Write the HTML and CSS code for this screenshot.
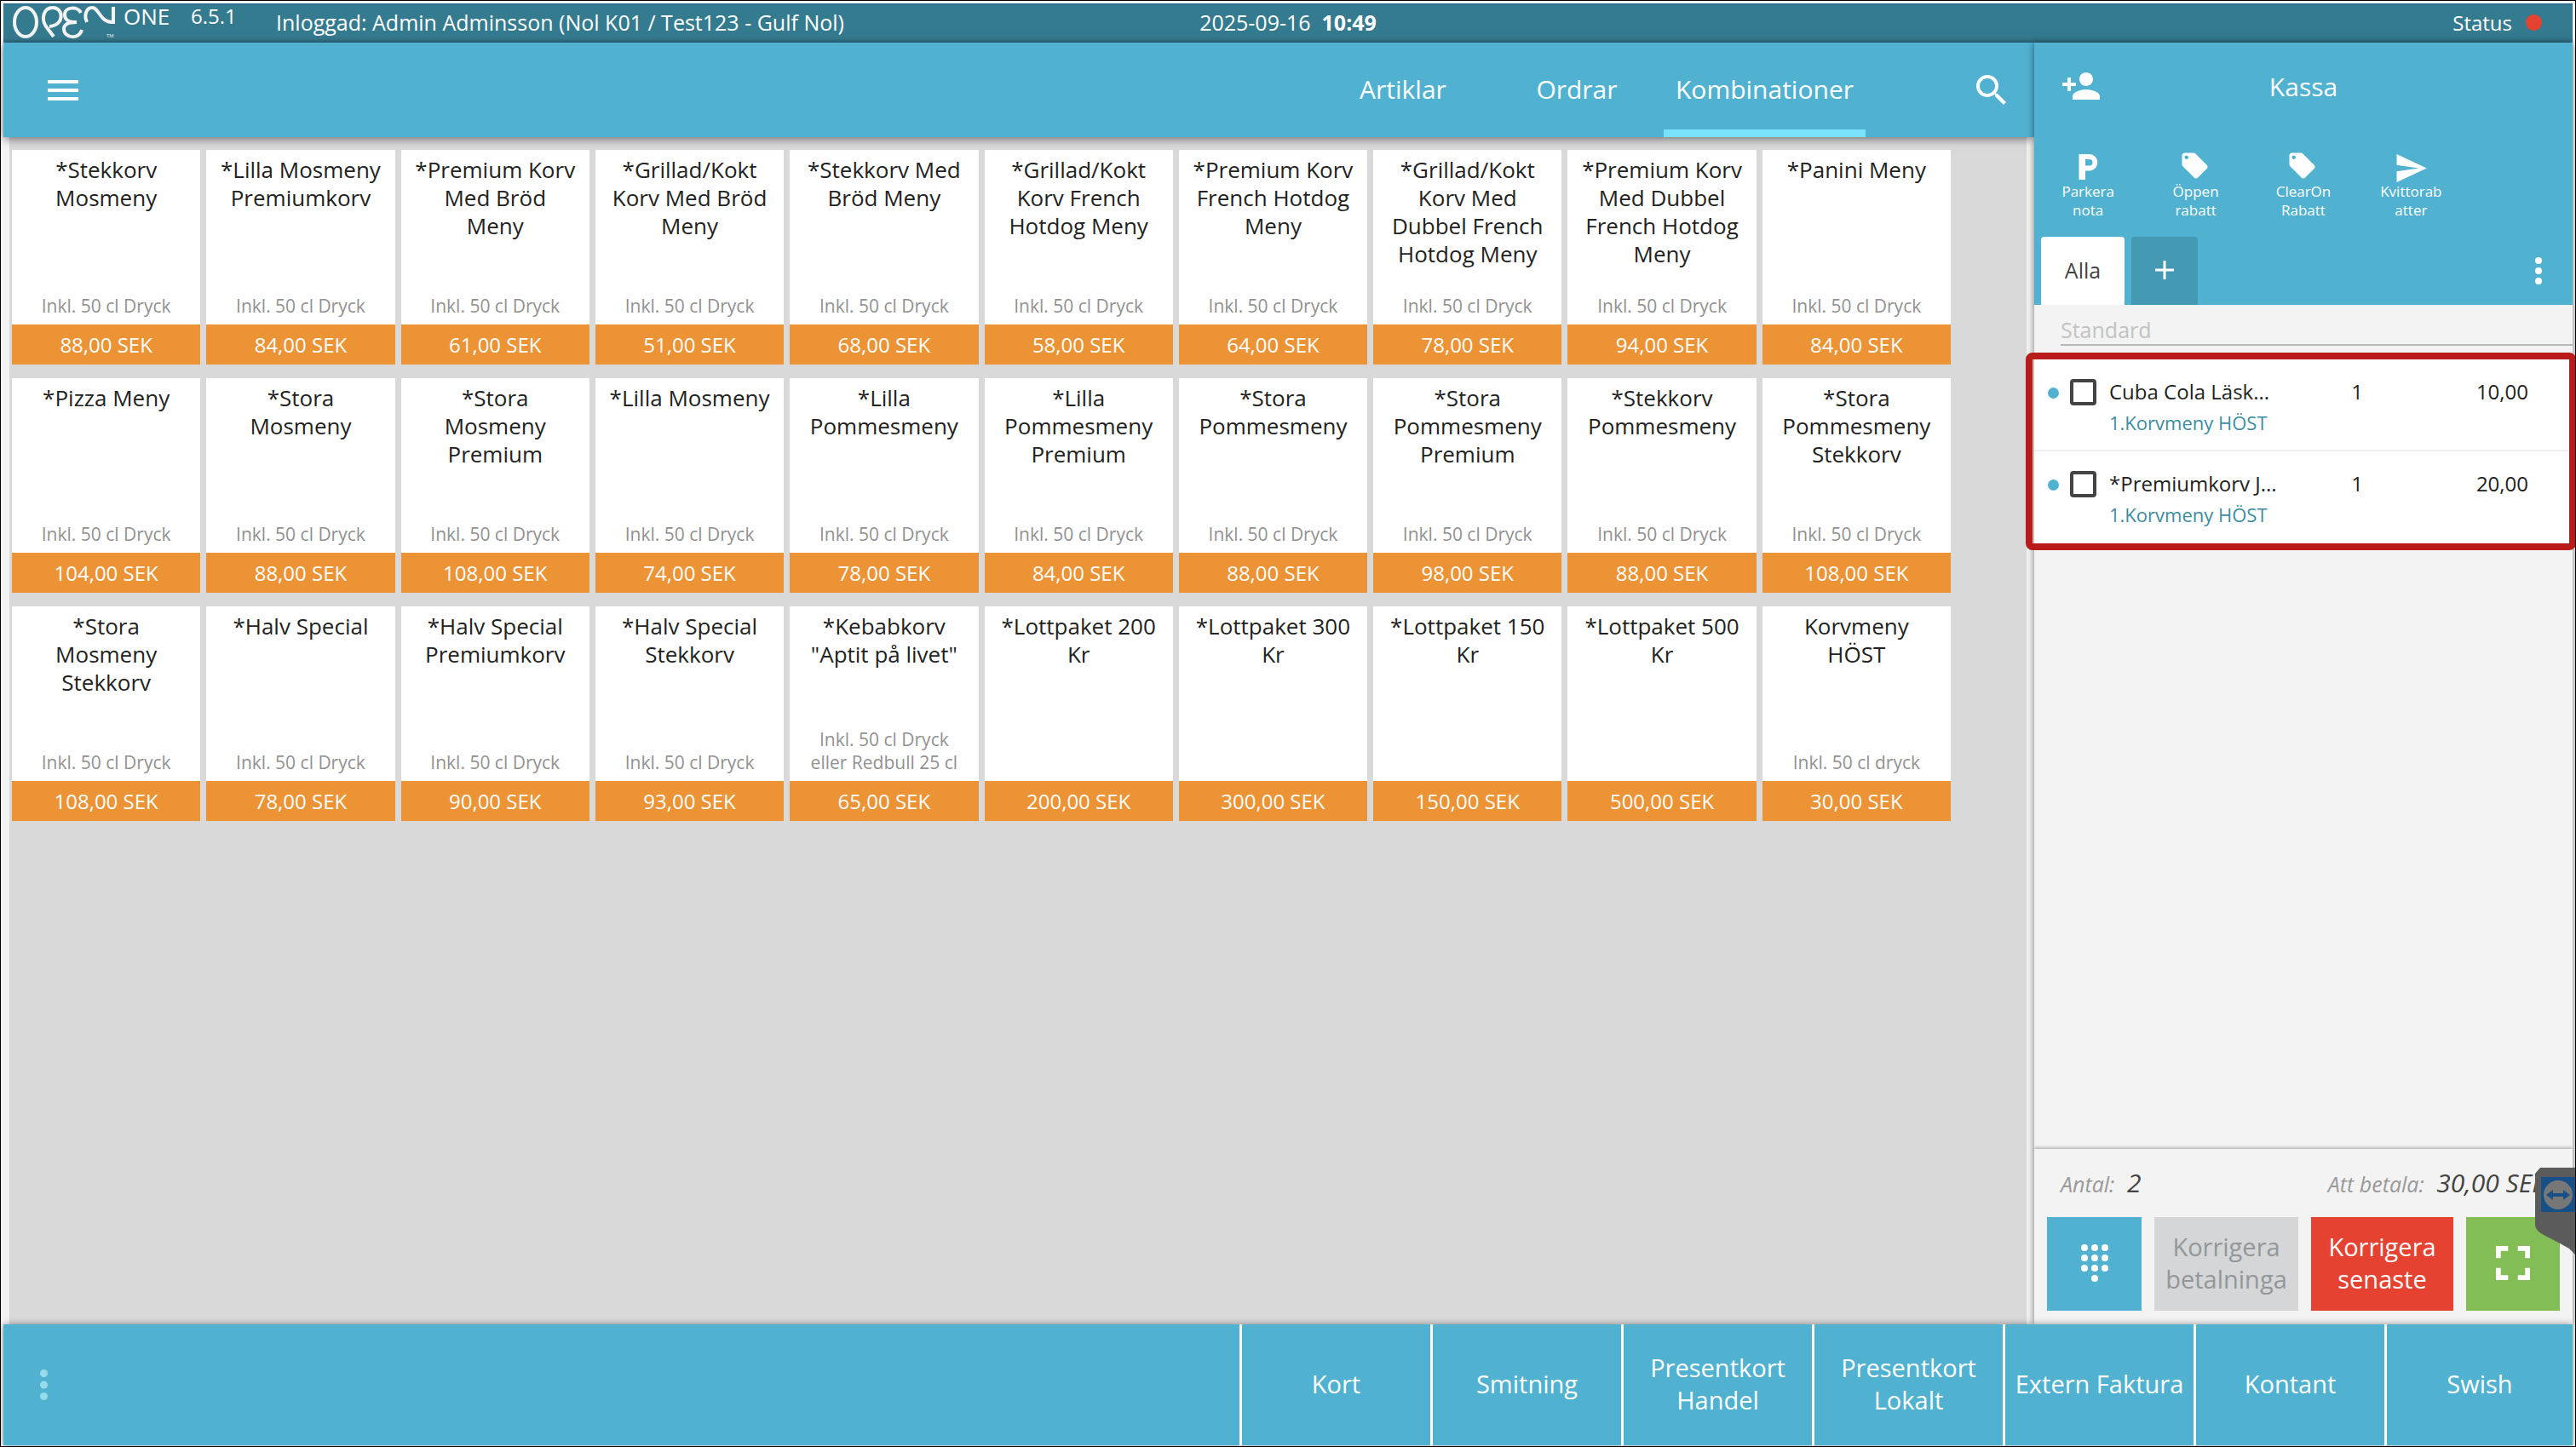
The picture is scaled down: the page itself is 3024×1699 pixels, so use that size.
FILE: index.html
```html
<!DOCTYPE html>
<html lang="sv">

<head>
    <meta charset="UTF-8">
    <title>Open One - Kassa</title>
    <link rel="stylesheet" href="styles.css">
</head>

<body>
    <header class="topbar">
        <div class="topbar-left">
            <svg class="logo" viewBox="0 0 122 40" role="img" aria-label="Open">
                <ellipse cx="16" cy="20" rx="13" ry="17" />
                <path d="M49 37 L40 25 C34 16 37 3 48 3 C61 3 62 24 44 25" />
                <path d="M81 9 C77 1 62 2 62 11 C62 18 67 20 76 20 C66 20 61 23 61 28 C61 39 79 41 82 29" />
                <path d="M88 20 C84 11 88 3 94 3 C103 3 102 20 119 20 V2" />
                <text x="111" y="38">TM</text>
            </svg>
            <span class="brand">ONE</span>
            <span class="version">6.5.1</span>
            <span class="user">Inloggad: Admin Adminsson (Nol K01 / Test123 - Gulf Nol)</span>
        </div>
        <span class="clock">2025-09-16&nbsp; <b>10:49</b></span>
        <span class="status">Status <i class="status-dot"></i></span>
    </header>

    <div class="content">
        <main class="left">
            <nav class="navbar">
                <button class="icon-btn menu-btn" aria-label="Meny">
                    <svg width="36" height="24" viewBox="0 0 36 24"><path d="M0 0h36v4H0zM0 10h36v4H0zM0 20h36v4H0z" /></svg>
                </button>
                <a class="tab" href="#artiklar">Artiklar</a>
                <a class="tab" href="#ordrar">Ordrar</a>
                <a class="tab active" href="#kombinationer">Kombinationer</a>
                <button class="icon-btn search-btn" aria-label="Sök">
                    <svg width="36" height="36" viewBox="3 3 18 18"><path d="M15.5 14h-.79l-.28-.27A6.471 6.471 0 0 0 16 9.500 6.500 6.500 0 1 0 9.500 16c1.610 0 3.090-.59 4.230-1.570l.27.28v.79l5 4.990L20.490 19l-4.990-5zm-6 0C7.010 14 5 11.990 5 9.500S7.010 5 9.500 5 14 7.010 14 9.500 11.990 14 9.500 14z" /></svg>
                </button>
            </nav>

            <div class="products">
                <button class="card"><span class="name">*Stekkorv<br>Mosmeny</span><span class="info">Inkl. 50 cl Dryck</span><span class="price">88,00 SEK</span></button>
                <button class="card"><span class="name">*Lilla Mosmeny<br>Premiumkorv</span><span class="info">Inkl. 50 cl Dryck</span><span class="price">84,00 SEK</span></button>
                <button class="card"><span class="name">*Premium Korv<br>Med Bröd<br>Meny</span><span class="info">Inkl. 50 cl Dryck</span><span class="price">61,00 SEK</span></button>
                <button class="card"><span class="name">*Grillad/Kokt<br>Korv Med Bröd<br>Meny</span><span class="info">Inkl. 50 cl Dryck</span><span class="price">51,00 SEK</span></button>
                <button class="card"><span class="name">*Stekkorv Med<br>Bröd Meny</span><span class="info">Inkl. 50 cl Dryck</span><span class="price">68,00 SEK</span></button>
                <button class="card"><span class="name">*Grillad/Kokt<br>Korv French<br>Hotdog Meny</span><span class="info">Inkl. 50 cl Dryck</span><span class="price">58,00 SEK</span></button>
                <button class="card"><span class="name">*Premium Korv<br>French Hotdog<br>Meny</span><span class="info">Inkl. 50 cl Dryck</span><span class="price">64,00 SEK</span></button>
                <button class="card"><span class="name">*Grillad/Kokt<br>Korv Med<br>Dubbel French<br>Hotdog Meny</span><span class="info">Inkl. 50 cl Dryck</span><span class="price">78,00 SEK</span></button>
                <button class="card"><span class="name">*Premium Korv<br>Med Dubbel<br>French Hotdog<br>Meny</span><span class="info">Inkl. 50 cl Dryck</span><span class="price">94,00 SEK</span></button>
                <button class="card"><span class="name">*Panini Meny</span><span class="info">Inkl. 50 cl Dryck</span><span class="price">84,00 SEK</span></button>

                <button class="card"><span class="name">*Pizza Meny</span><span class="info">Inkl. 50 cl Dryck</span><span class="price">104,00 SEK</span></button>
                <button class="card"><span class="name">*Stora<br>Mosmeny</span><span class="info">Inkl. 50 cl Dryck</span><span class="price">88,00 SEK</span></button>
                <button class="card"><span class="name">*Stora<br>Mosmeny<br>Premium</span><span class="info">Inkl. 50 cl Dryck</span><span class="price">108,00 SEK</span></button>
                <button class="card"><span class="name">*Lilla Mosmeny</span><span class="info">Inkl. 50 cl Dryck</span><span class="price">74,00 SEK</span></button>
                <button class="card"><span class="name">*Lilla<br>Pommesmeny</span><span class="info">Inkl. 50 cl Dryck</span><span class="price">78,00 SEK</span></button>
                <button class="card"><span class="name">*Lilla<br>Pommesmeny<br>Premium</span><span class="info">Inkl. 50 cl Dryck</span><span class="price">84,00 SEK</span></button>
                <button class="card"><span class="name">*Stora<br>Pommesmeny</span><span class="info">Inkl. 50 cl Dryck</span><span class="price">88,00 SEK</span></button>
                <button class="card"><span class="name">*Stora<br>Pommesmeny<br>Premium</span><span class="info">Inkl. 50 cl Dryck</span><span class="price">98,00 SEK</span></button>
                <button class="card"><span class="name">*Stekkorv<br>Pommesmeny</span><span class="info">Inkl. 50 cl Dryck</span><span class="price">88,00 SEK</span></button>
                <button class="card"><span class="name">*Stora<br>Pommesmeny<br>Stekkorv</span><span class="info">Inkl. 50 cl Dryck</span><span class="price">108,00 SEK</span></button>

                <button class="card"><span class="name">*Stora<br>Mosmeny<br>Stekkorv</span><span class="info">Inkl. 50 cl Dryck</span><span class="price">108,00 SEK</span></button>
                <button class="card"><span class="name">*Halv Special</span><span class="info">Inkl. 50 cl Dryck</span><span class="price">78,00 SEK</span></button>
                <button class="card"><span class="name">*Halv Special<br>Premiumkorv</span><span class="info">Inkl. 50 cl Dryck</span><span class="price">90,00 SEK</span></button>
                <button class="card"><span class="name">*Halv Special<br>Stekkorv</span><span class="info">Inkl. 50 cl Dryck</span><span class="price">93,00 SEK</span></button>
                <button class="card"><span class="name">*Kebabkorv<br>"Aptit på livet"</span><span class="info">Inkl. 50 cl Dryck<br>eller Redbull 25 cl</span><span class="price">65,00 SEK</span></button>
                <button class="card"><span class="name">*Lottpaket 200<br>Kr</span><span class="price">200,00 SEK</span></button>
                <button class="card"><span class="name">*Lottpaket 300<br>Kr</span><span class="price">300,00 SEK</span></button>
                <button class="card"><span class="name">*Lottpaket 150<br>Kr</span><span class="price">150,00 SEK</span></button>
                <button class="card"><span class="name">*Lottpaket 500<br>Kr</span><span class="price">500,00 SEK</span></button>
                <button class="card"><span class="name">Korvmeny<br>HÖST</span><span class="info">Inkl. 50 cl dryck</span><span class="price">30,00 SEK</span></button>
            </div>
        </main>

        <aside class="register">
            <div class="register-head">
                <div class="register-title">
                    <button class="icon-btn" aria-label="Lägg till kund">
                        <svg width="44" height="32" viewBox="1 4 22 16"><path d="M15 12c2.210 0 4-1.790 4-4s-1.790-4-4-4-4 1.790-4 4 1.790 4 4 4zm-9-2V7H4v3H1v2h3v3h2v-3h3v-2H6zm9 4c-2.670 0-8 1.340-8 4v2h16v-2c0-2.660-5.330-4-8-4z" /></svg>
                    </button>
                    <h1>Kassa</h1>
                </div>
                <div class="actions">
                    <button class="action">
                        <svg viewBox="0 0 24 24"><path d="M13 2H5v20h5v-7h3c3.600 0 6.500-2.900 6.500-6.500S16.600 2 13 2zm.2 9H10V6h3.200c1.400 0 2.500 1.100 2.500 2.500S14.600 11 13.200 11z" /></svg>
                        Parkera<br>nota
                    </button>
                    <button class="action">
                        <svg viewBox="0 0 24 24"><path d="M20.410 10.580l-9-9C11.050 1.220 10.550 1 10 1H3c-1.100 0-2 .9-2 2v7c0 .55.22 1.050.59 1.420l9 9c.36.36.86.58 1.410.58.55 0 1.050-.22 1.410-.59l7-7c.37-.36.59-.86.59-1.410 0-.55-.23-1.060-.59-1.420zM4.500 6C3.670 6 3 5.330 3 4.500S3.670 3 4.500 3 6 3.670 6 4.500 5.330 6 4.500 6z" /></svg>
                        Öppen<br>rabatt
                    </button>
                    <button class="action">
                        <svg viewBox="0 0 24 24"><path d="M20.410 10.580l-9-9C11.050 1.220 10.550 1 10 1H3c-1.100 0-2 .9-2 2v7c0 .55.22 1.050.59 1.420l9 9c.36.36.86.58 1.410.58.55 0 1.050-.22 1.410-.59l7-7c.37-.36.59-.86.59-1.410 0-.55-.23-1.060-.59-1.420zM4.500 6C3.670 6 3 5.330 3 4.500S3.670 3 4.500 3 6 3.670 6 4.500 5.330 6 4.500 6z" /></svg>
                        ClearOn<br>Rabatt
                    </button>
                    <button class="action">
                        <svg viewBox="0 0 24 24"><path d="M1 24L24.500 13 1 2v8.500l17 2.500-17 2.500z" /></svg>
                        Kvittorab<br>atter
                    </button>
                </div>
                <div class="nota-tabs">
                    <button class="nota-tab selected">Alla</button>
                    <button class="nota-tab add" aria-label="Ny nota">
                        <svg width="22" height="22" viewBox="0 0 22 22"><path d="M9.500 0h3v9.500H22v3h-9.500V22h-3v-9.500H0v-3h9.500z" /></svg>
                    </button>
                    <button class="icon-btn more" aria-label="Mer">
                        <svg width="8" height="32" viewBox="0 0 8 32"><circle cx="4" cy="4" r="4" /><circle cx="4" cy="16" r="4" /><circle cx="4" cy="28" r="4" /></svg>
                    </button>
                </div>
            </div>

            <input class="note-name" type="text" placeholder="Standard" aria-label="Notans namn">

            <div class="order">
                <table>
                    <tr>
                        <td>
                            <div class="item">
                                <i class="dot"></i>
                                <input type="checkbox" id="rad1">
                                <label for="rad1">Cuba Cola Läsk...<small>1.Korvmeny HÖST</small></label>
                            </div>
                        </td>
                        <td class="col-qty">1</td>
                        <td class="col-sum">10,00</td>
                    </tr>
                    <tr>
                        <td>
                            <div class="item">
                                <i class="dot"></i>
                                <input type="checkbox" id="rad2">
                                <label for="rad2">*Premiumkorv J...<small>1.Korvmeny HÖST</small></label>
                            </div>
                        </td>
                        <td class="col-qty">1</td>
                        <td class="col-sum">20,00</td>
                    </tr>
                </table>
            </div>

            <div class="summary">
                <div class="totals">
                    <span>Antal: <b>2</b></span>
                    <span>Att betala: <b>30,00 SEK</b></span>
                </div>
                <div class="register-buttons">
                    <button class="big-btn blue" aria-label="Knappsats">
                        <svg width="32" height="44" viewBox="0 0 32 44">
                            <circle cx="4" cy="4" r="4" /><circle cx="16" cy="4" r="4" /><circle cx="28" cy="4" r="4" />
                            <circle cx="4" cy="16" r="4" /><circle cx="16" cy="16" r="4" /><circle cx="28" cy="16" r="4" />
                            <circle cx="4" cy="28" r="4" /><circle cx="16" cy="28" r="4" /><circle cx="28" cy="28" r="4" />
                            <circle cx="16" cy="40" r="4" />
                        </svg>
                    </button>
                    <button class="big-btn grey" disabled>Korrigera<br>betalninga</button>
                    <button class="big-btn red">Korrigera<br>senaste</button>
                    <button class="big-btn green" aria-label="Helskärm">
                        <svg width="40" height="40" viewBox="5 5 14 14"><path d="M7 14H5v5h5v-2H7v-3zm-2-4h2V7h3V5H5v5zm12 7h-3v2h5v-5h-2v3zM14 5v2h3v3h2V5h-5z" /></svg>
                    </button>
                </div>
                <!-- TeamViewer-fliken i skärmkanten -->
                <svg class="remote" width="48" height="103" viewBox="0 0 48 103">
                    <path d="M0 7 L6 0 H48 V103 L40 95 Q26 87 10 79 Q1 74 0 68 Z" fill="#5b5b5b" />
                    <rect x="7" y="11" width="41" height="41" fill="#184f86" />
                    <circle cx="27" cy="32" r="17" fill="#777" />
                    <path d="M13 32 l8-6 v4 h12 v-4 l8 6 -8 6 v-4 h-12 v4 z" fill="#184f86" />
                </svg>
            </div>
        </aside>
    </div>

    <footer class="paybar">
        <button class="pay-more" aria-label="Fler betalsätt">
            <svg width="9" height="36" viewBox="0 0 9 36"><circle cx="4.500" cy="4.500" r="4.500" /><circle cx="4.500" cy="18" r="4.500" /><circle cx="4.500" cy="31.500" r="4.500" /></svg>
        </button>
        <button class="pay">Kort</button>
        <button class="pay">Smitning</button>
        <button class="pay">Presentkort<br>Handel</button>
        <button class="pay">Presentkort<br>Lokalt</button>
        <button class="pay">Extern Faktura</button>
        <button class="pay">Kontant</button>
        <button class="pay">Swish</button>
    </footer>
</body>

</html>
```
FILE: styles.css
```css
* {
    box-sizing: border-box;
}

body {
    margin: 0;
    height: 100vh;
    padding: 3px 3px 1px;
    border: 1px solid #000;
    display: flex;
    flex-direction: column;
    overflow: hidden;
    background: #f3f3f3;
    font-family: 'Segoe UI', 'Open Sans', sans-serif;
    font-size: 24px;
    color: #222;
}

button {
    border: none;
    padding: 0;
    background: none;
    font-family: inherit;
    color: inherit;
    cursor: pointer;
}

svg {
    display: block;
    fill: currentColor;
}

/* Översta raden */
.topbar {
    height: 46px;
    flex: none;
    display: grid;
    grid-template-columns: 1fr auto 1fr;
    align-items: center;
    padding: 0 36px 2px 10px;
    background: #357b90;
    box-shadow: inset 0 2px 1px #2d7390, inset 0 -4px 3px -2px #2c6c80;
    color: #fff;
}

.topbar-left {
    display: flex;
    align-items: center;
    white-space: nowrap;
}

.logo {
    width: 122px;
    height: 40px;
    fill: none;
    stroke: #f3f3f3;
    stroke-width: 4;
}

.logo text {
    fill: #f3f3f3;
    stroke: none;
    font-size: 6px;
}

.brand {
    width: 88px;
    padding-left: 9px;
    font-size: 26px;
    line-height: 26px;
    align-self: start;
}

.version {
    width: 100px;
    line-height: 26px;
    align-self: start;
}

.user,
.clock {
    font-size: 25px;
}

.clock {
    padding-left: 26px;
}

.status {
    display: flex;
    align-items: center;
    justify-content: flex-end;
    gap: 16px;
}

.status-dot {
    width: 19px;
    height: 19px;
    border-radius: 50%;
    background: #e54232;
}

.content {
    flex: 1;
    min-height: 0;
    display: grid;
    grid-template-columns: minmax(0, 1fr) 632px;
}

.left {
    display: flex;
    flex-direction: column;
}

.navbar {
    height: 111px;
    flex: none;
    display: flex;
    align-items: stretch;
    padding: 0 32px 0 52px;
    background: #50b1d1;
    box-shadow: 0 2px 10px rgba(0, 0, 0, 0.5);
    color: #fff;
    z-index: 1;
}

.icon-btn {
    color: #fff;
    display: flex;
    align-items: center;
}

.menu-btn {
    margin-right: auto;
}

.tab {
    min-width: 204px;
    display: flex;
    align-items: center;
    justify-content: center;
    padding: 0 14px;
    border-top: 6px solid transparent;
    border-bottom: 9px solid transparent;
    font-size: 30px;
    color: #fff;
    text-decoration: none;
}

.tab.active {
    border-bottom-color: #7ae3fb;
}

.search-btn {
    margin-left: 130px;
}

.products {
    flex: 1;
    margin: 0 9px 0 7px;
    padding: 15px 89px 0 3px;
    display: grid;
    grid-template-columns: repeat(10, 1fr);
    align-content: start;
    gap: 16px 7px;
    background: #d9d9d9;
}

.card {
    height: 252px;
    display: flex;
    flex-direction: column;
    background: #fff;
    text-align: center;
}

.name {
    width: 100%;
    padding-top: 7px;
    font-size: 26px;
    line-height: 33px;
    color: #222;
}

.info {
    width: 100%;
    margin-top: auto;
    padding-bottom: 8px;
    font-size: 21px;
    line-height: 27px;
    color: #919191;
}

.price {
    width: 100%;
    background: #ec9336;
    font-size: 24px;
    line-height: 47px;
    color: #fff;
}

.name + .price {
    margin-top: auto;
}

/* Kassan till höger */
.register {
    display: flex;
    flex-direction: column;
    background: #f3f3f3;
    box-shadow: 0 0 8px rgba(0, 0, 0, 0.5);
    z-index: 2;
}

.register-head {
    height: 308px;
    flex: none;
    display: flex;
    flex-direction: column;
    background: #50b1d1;
    color: #fff;
}

.register-title {
    height: 102px;
    display: grid;
    grid-template-columns: 44px 1fr 44px;
    align-items: center;
    padding: 0 33px;
}

.register-title h1 {
    margin: 0;
    font-size: 30px;
    font-weight: normal;
    text-align: center;
}

.actions {
    display: flex;
    flex: 1;
    align-items: flex-start;
    padding-top: 26px;
}

.action {
    width: 20%;
    font-size: 17px;
    line-height: 22px;
}

.action svg {
    width: 36px;
    height: 36px;
    margin: 0 auto;
    overflow: visible;
}

.nota-tabs {
    display: flex;
    align-items: stretch;
    gap: 8px;
    height: 80px;
    padding: 0 36px 0 8px;
}

.nota-tab {
    width: 98px;
    padding-bottom: 3px;
    border-radius: 4px 4px 0 0;
    font-size: 25px;
}

.nota-tab.selected {
    background: #fff;
    color: #444;
}

.nota-tab.add {
    width: 78px;
    background: #4398b2;
}

.nota-tab.add svg {
    margin: 0 auto;
}

.more {
    margin-left: auto;
}

.note-name {
    height: 48px;
    margin: 0 0 16px 31px;
    padding: 12px 0 0;
    border: none;
    border-bottom: 2px solid #b5b8b8;
    background: none;
    font-family: inherit;
    font-size: 25px;
}

.note-name::placeholder {
    color: #c0c3c3;
}

.order {
    position: relative;
    background: #fff;
}

/* Röd markering runt raderna */
.order::after {
    content: "";
    position: absolute;
    inset: -8px -4px -8px -10px;
    border: 8px solid #b91a1a;
    border-radius: 8px;
    pointer-events: none;
}

.order table {
    width: 100%;
    border-spacing: 0;
}

.order td {
    height: 108px;
    padding: 20px 0 0;
    vertical-align: top;
    line-height: 36px;
}

.order tr:first-child td {
    border-bottom: 2px solid #f0f0f0;
}

.item {
    display: flex;
    align-items: flex-start;
}

.dot {
    flex: none;
    width: 13px;
    height: 13px;
    margin: 13px 13px 0 16px;
    border-radius: 50%;
    background: #50b1d1;
}

.item input {
    appearance: none;
    width: 31px;
    height: 31px;
    margin: 3px 15px 0 0;
    border: 4px solid #444;
    border-radius: 4px;
    background: #fff;
}

.item small {
    display: block;
    font-size: 22px;
    color: #3d8c9f;
}

.order .col-qty {
    width: 16%;
    text-align: center;
}

.order .col-sum {
    width: 32%;
    padding-right: 52px;
    text-align: right;
}

.summary {
    position: relative;
    margin-top: auto;
    padding: 18px 15px 16px;
    box-shadow: 0 -2px 3px #b8b8b8;
}

.totals {
    display: flex;
    justify-content: space-between;
    height: 62px;
    padding: 0 16px;
    line-height: 44px;
    font-size: 25px;
    font-style: italic;
    color: #999;
}

.totals b {
    margin-left: 8px;
    font-size: 30px;
    font-weight: normal;
    color: #444;
}

.register-buttons {
    display: grid;
    grid-template-columns: 111fr 169fr 167fr 110fr;
    gap: 15px;
}

.big-btn {
    height: 110px;
    padding-bottom: 2px;
    font-size: 29px;
    line-height: 38px;
    color: #fff;
}

.big-btn svg {
    margin: 0 auto;
}

.blue {
    background: #50b1d1;
}

.grey {
    background: #d4d6d8;
    color: #929898;
}

.red {
    background: #e54232;
}

.green {
    background: #82bd55;
}

.remote {
    position: absolute;
    top: 22px;
    right: -4px;
}

/* Betalsätt */
.paybar {
    height: 142px;
    flex: none;
    display: flex;
    background: #50b1d1;
    box-shadow: 0 0 8px rgba(0, 0, 0, 0.4);
    z-index: 3;
}

.pay-more {
    margin-right: auto;
    padding: 0 43px;
    color: #97dbe9;
}

.pay {
    width: 224px;
    padding-bottom: 3px;
    border-left: 3px solid #fff;
    font-size: 29px;
    line-height: 38px;
    color: #fff;
}

.pay:last-child {
    width: 221px;
}
```
